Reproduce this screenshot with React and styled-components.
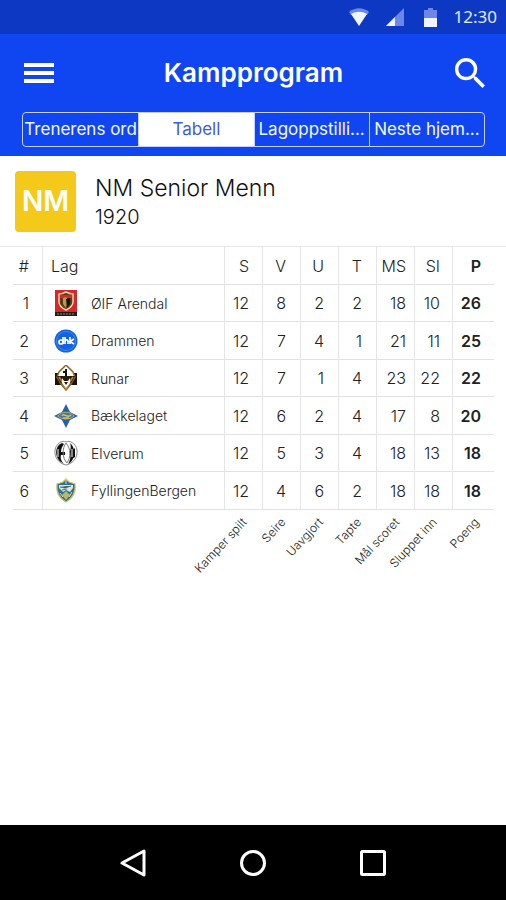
import React from "react";
import styled, { createGlobalStyle } from "styled-components";

const GlobalStyle = createGlobalStyle`
  * { box-sizing: border-box; }
  body {
    margin: 0;
    background: #fff;
    color: #222;
    font-family: Inter, "Liberation Sans", sans-serif;
  }
  button { font-family: inherit; border: 0; padding: 0; background: none; color: inherit; cursor: pointer; }
  svg { display: block; }
`;

const Screen = styled.div`
  display: flex;
  flex-direction: column;
  min-height: 100vh;
`;

const StatusBar = styled.div`
  display: flex;
  justify-content: flex-end;
  align-items: center;
  height: 34px;
  padding-right: 9px;
  background: #0d38c4;
  color: #e4eaff;
`;

const StatusIcon = styled.svg`
  margin-right: ${(p) => p.$gap}px;
`;

const Clock = styled.time`
  font: 17px/34px "Noto Sans", sans-serif;
`;

const Header = styled.header`
  padding: 16px 21px 9px 22px;
  background: #1046f2;
  color: #fff;
`;

const TitleRow = styled.div`
  display: grid;
  grid-template-columns: 1fr auto 1fr;
  align-items: center;
  height: 46px;
  margin-bottom: 16px;
`;

const Title = styled.h1`
  margin: 0;
  font-size: 26px;
  line-height: 46px;
  font-weight: 600;
`;

const IconButton = styled.button`
  justify-self: ${(p) => p.$side};
`;

const Tabs = styled.div`
  display: grid;
  grid-template-columns: repeat(4, 1fr);
  height: 35px;
  border: 1px solid #c3d0ff;
  border-radius: 4px;
  overflow: hidden;
`;

const Tab = styled.button`
  && {
    background: ${(p) => (p.$active ? "#fff" : "transparent")};
    color: ${(p) => (p.$active ? "#3c5be0" : "#f4f6ff")};
    font-size: 17px;
    line-height: 33px;
    white-space: nowrap;
  }
  && + && { border-left: 1px solid #c3d0ff; }
`;

const Main = styled.main`
  flex: 1;
`;

const Competition = styled.section`
  display: flex;
  align-items: center;
  gap: 19px;
  height: 91px;
  padding: 0 15px;
  border-bottom: 1px solid #e8e8e8;
`;

const Badge = styled.div`
  width: 61px;
  border-radius: 4px;
  background: #f5c91a;
  color: #fff;
  font-size: 28px;
  line-height: 61px;
  font-weight: 600;
  text-align: center;
`;

const CompetitionText = styled.div`
  padding-top: 2px;
`;

const CompetitionName = styled.h2`
  margin: 0;
  color: #111;
  font-size: 23px;
  line-height: 30px;
  font-weight: 300;
`;

const Season = styled.p`
  margin: 0;
  color: #111;
  font-size: 20px;
  line-height: 28px;
  font-weight: 300;
`;

const TableWrap = styled.div`
  padding: 0 12px 0 13px;
`;

const Table = styled.table`
  width: 100%;
  table-layout: fixed;
  border-collapse: separate;
  border-spacing: 0;
`;

const Column = styled.col`
  width: ${(p) => (p.$width ? `${p.$width}px` : "auto")};
`;

const Row = styled.tr`
  height: ${(p) => (p.$head ? 38 : 37)}px;
  &:nth-child(even) { height: 38px; }
`;

const Cell = styled.td`
  padding: 0 ${(p) => p.$pad ?? 13}px 0 0;
  border-left: ${(p) => (p.$first ? 0 : 1)}px solid #e6e6e6;
  border-bottom: 1px solid #e2e2e2;
  font-size: 16px;
  font-weight: ${(p) => (p.$strong ? 600 : 300)};
  text-align: right;
`;

const LagCell = styled(Cell)`
  padding: 0 0 0 8px;
  text-align: left;
`;

const Team = styled.div`
  display: flex;
  align-items: center;
  gap: 13px;
  padding-left: 3px;
  font-size: 14px;
`;

const LegendCell = styled.td`
  height: 70px;
  padding: 2px 17px 0 0;
  vertical-align: top;
`;

const LegendSlot = styled.div`
  display: flex;
  justify-content: flex-end;
`;

const LegendLabel = styled.span`
  flex: none;
  font-size: 12px;
  line-height: 16px;
  font-weight: 300;
  white-space: nowrap;
  transform: rotate(-47deg);
  transform-origin: right center;
`;

const SystemNav = styled.nav`
  display: flex;
  justify-content: center;
  gap: 94px;
  align-items: center;
  height: 75px;
  background: #000;
  color: #fff;
`;

const crests = {
  arendal: (
    <>
      <path fill="#d8262c" d="M1 0h22v22H1z" />
      <path fill="#2a1a16" d="M1 22h22v4H1z" />
      <path stroke="#888" strokeDasharray="2 1" d="M3 24h18" />
      <path fill="#5b3b19" stroke="#f0d4a0" strokeWidth="1.5" d="M5 4c3 0 5-1 7-2 2 1 4 2 7 2v8c0 4-3 6-7 8-4-2-7-4-7-8z" />
      <path fill="#d9252b" d="M6 5h12v3H6z" />
      <path fill="#bd9a46" d="M9 8l3-1 2 3-2 8-3-4z" />
      <path fill="#17100b" d="M12 9l4-1v6l-3 4z" />
    </>
  ),
  drammen: (
    <>
      <circle cx="12" cy="13" r="11.5" fill="#1262e2" />
      <circle cx="12" cy="13" r="9.5" fill="none" stroke="#3d8af5" />
      <g fill="none" stroke="#fff" strokeWidth="1.7">
        <circle cx="7" cy="14" r="2" />
        <path d="M9 9v7M11 9v7m0-3c1-2 3-1 3 0v3M16 9v7m4-5-4 2.5 4 2.5" />
      </g>
    </>
  ),
  runar: (
    <>
      <path fill="#171310" d="M1 8h22v12H1z" />
      <path fill="#fff" stroke="#8c671f" strokeWidth="1.5" d="M12 0l7 7 2 5-4 7-5 6-5-6-4-7 2-5z" />
      <path stroke="#17130e" strokeWidth="2" d="M12 4v7M9 7h3" />
      <path fill="#2a1c0c" d="M3 11h18l-3 6-6 6-6-6z" />
      <path fill="none" stroke="#b98b32" strokeWidth="1.5" d="M5 12l4 6 3 6 3-6 4-6" />
      <path fill="#fff" d="M8 13l2 3h4l2-3v5l-4 5-4-5z" />
      <path fill="#2a1c0c" d="M10 17h4l-2 3z" />
    </>
  ),
  baekkelaget: (
    <>
      <path fill="#2461aa" d="M12 1l4 8 8 4-8 4-4 8-4-8-8-4 8-4z" />
      <path fill="#47759a" d="M2 13c5-4 15-4 20 0-5 4-15 4-20 0z" />
      <path fill="none" stroke="#bcae66" d="M4 13c4-5 12-5 16 0-4 4-12 4-16 0z" />
      <path fill="none" stroke="#d8c45e" strokeWidth="1.5" d="M8 13c2-4 5 3 9-1M9 15h6" />
    </>
  ),
  elverum: (
    <>
      <path fill="#fff" stroke="#888" d="M12 2c3-2 10 1 11 8s-4 14-11 15C5 24 0 17 1 10S9 0 12 2z" />
      <path fill="#111" d="M8 3C0 6 1 18 7 22l3 2c-3-3-4-6-3-9h4v-3H7c0-3 1-5 3-8zM16 3c5 4 6 13 1 19l-3 2c2-3 3-7 2-10v-3c1-3 1-5 0-8zM18 11l3-3v9l-3 2z" />
      <path fill="none" stroke="#777" d="M12 3c-4 5-4 15 1 20 4-6 4-14-1-20z" />
      <path stroke="#fff" d="M4 9v8M18 9v8" />
    </>
  ),
  fyllingen: (
    <>
      <path fill="#2b7196" stroke="#cdbb63" strokeWidth="1.3" d="M3 6l6-2 3-3 3 3 6 2c1 8-2 14-9 18C5 20 2 14 3 6z" />
      <path fill="#dce6df" d="M5 7h14v3l-3 4-4-2-3 2-4-4z" />
      <path fill="#bfb768" d="M12 13l4 4-4 5-4-5z" />
      <path stroke="#407e9d" d="M6 9l5 1 6-2M8 12l5-1" />
      <path stroke="#e3dc9d" d="M6 15l3 4M18 14l-3 5M12 1v5" />
    </>
  ),
};

const Crest = ({ name }) => (
  <svg width="24" height="26" viewBox="0 0 24 26" aria-hidden="true">
    {crests[name]}
  </svg>
);

const columns = [
  { key: "S", legend: "Kamper spilt", width: 38 },
  { key: "V", legend: "Seire", width: 38, pad: 14 },
  { key: "U", legend: "Uavgjort", width: 38, pad: 14 },
  { key: "T", legend: "Tapte", width: 38, pad: 14 },
  { key: "MS", legend: "Mål scoret", width: 38, pad: 8 },
  { key: "SI", legend: "Sluppet inn", width: 38, pad: 12 },
  { key: "P", legend: "Poeng", width: 42, strong: true },
];
const teams = [
  { name: "ØIF Arendal", crest: "arendal", stats: [12, 8, 2, 2, 18, 10, 26] },
  { name: "Drammen", crest: "drammen", stats: [12, 7, 4, 1, 21, 11, 25] },
  { name: "Runar", crest: "runar", stats: [12, 7, 1, 4, 23, 22, 22] },
  { name: "Bækkelaget", crest: "baekkelaget", stats: [12, 6, 2, 4, 17, 8, 20] },
  { name: "Elverum", crest: "elverum", stats: [12, 5, 3, 4, 18, 13, 18] },
  { name: "FyllingenBergen", crest: "fyllingen", stats: [12, 4, 6, 2, 18, 18, 18] },
];
const tabs = ["Trenerens ord", "Tabell", "Lagoppstilli...", "Neste hjem..."];

export default function App() {
  return (
    <Screen>
      <GlobalStyle />
      <StatusBar>
        <StatusIcon $gap={17} width="20" height="18" viewBox="0 0 20 18">
          <path fill="#6c87e4" d="M0 4c6-5 14-5 20 0l-2 3H2z" />
          <path fill="#f0f4ff" d="M2 6c5-3 11-3 16 0l-8 12z" />
        </StatusIcon>
        <StatusIcon $gap={20} width="18" height="18" viewBox="0 0 18 18">
          <path fill="#6c87e4" d="M18 0v18H0z" />
          <path fill="#f0f4ff" d="M9 9v9H0z" />
        </StatusIcon>
        <StatusIcon $gap={17} width="13" height="19" viewBox="0 0 13 19">
          <path fill="#6c87e4" d="M4 0h5v2h4v9H0V2h4z" />
          <path fill="#f0f4ff" d="M0 10h13v9H0z" />
        </StatusIcon>
        <Clock>12:30</Clock>
      </StatusBar>

      <Header>
        <TitleRow>
          <IconButton $side="start" aria-label="Meny">
            <svg width="34" height="24" viewBox="0 0 34 24">
              <path fill="#fff" d="M2 2h30v4H2zM2 10h30v4H2zM2 18h30v4H2z" />
            </svg>
          </IconButton>
          <Title>Kampprogram</Title>
          <IconButton $side="end" aria-label="Søk">
            <svg width="30" height="30" viewBox="3 3 17.5 17.5">
              <path
                fill="#fff"
                d="M15.5 14h-.79l-.28-.27A6.47 6.47 0 0 0 16 9.5 6.5 6.5 0 1 0 9.5 16c1.61 0 3.09-.59 4.23-1.57l.27.28v.79l5 4.99L20.49 19l-4.99-5zm-6 0C7.01 14 5 11.99 5 9.5S7.01 5 9.5 5 14 7.01 14 9.5 11.99 14 9.5 14z"
              />
            </svg>
          </IconButton>
        </TitleRow>
        <Tabs role="tablist">
          {tabs.map((tab) => (
            <Tab key={tab} role="tab" aria-selected={tab === "Tabell"} $active={tab === "Tabell"}>
              {tab}
            </Tab>
          ))}
        </Tabs>
      </Header>

      <Main>
        <Competition>
          <Badge>NM</Badge>
          <CompetitionText>
            <CompetitionName>NM Senior Menn</CompetitionName>
            <Season>1920</Season>
          </CompetitionText>
        </Competition>
        <TableWrap>
          <Table>
            <colgroup>
              <Column $width={29} />
              <Column />
              {columns.map((c) => (
                <Column key={c.key} $width={c.width} />
              ))}
            </colgroup>
            <thead>
              <Row $head>
                <Cell as="th" $first>#</Cell>
                <LagCell as="th">Lag</LagCell>
                {columns.map((c) => (
                  <Cell as="th" key={c.key} $pad={c.pad} $strong={c.strong}>{c.key}</Cell>
                ))}
              </Row>
            </thead>
            <tbody>
              {teams.map((team, i) => (
                <Row key={team.name}>
                  <Cell $first>{i + 1}</Cell>
                  <LagCell>
                    <Team>
                      <Crest name={team.crest} />
                      {team.name}
                    </Team>
                  </LagCell>
                  {columns.map((c, j) => (
                    <Cell key={c.key} $pad={c.pad} $strong={c.strong}>{team.stats[j]}</Cell>
                  ))}
                </Row>
              ))}
            </tbody>
            <tfoot>
              <tr>
                <td colSpan="2" />
                {columns.map((c) => (
                  <LegendCell key={c.key}>
                    <LegendSlot>
                      <LegendLabel>{c.legend}</LegendLabel>
                    </LegendSlot>
                  </LegendCell>
                ))}
              </tr>
            </tfoot>
          </Table>
        </TableWrap>
      </Main>

      <SystemNav>
        <button aria-label="Tilbake">
          <svg width="26" height="28" viewBox="0 0 26 28">
            <path fill="none" stroke="#fff" strokeWidth="3" strokeLinejoin="round" d="M24 2v24L2 14z" />
          </svg>
        </button>
        <button aria-label="Hjem">
          <svg width="26" height="26" viewBox="0 0 26 26">
            <circle cx="13" cy="13" r="11.5" fill="none" stroke="#fff" strokeWidth="3" />
          </svg>
        </button>
        <button aria-label="Oversikt">
          <svg width="26" height="26" viewBox="0 0 26 26">
            <rect x="1.5" y="1.5" width="23" height="23" rx="1" fill="none" stroke="#fff" strokeWidth="3" />
          </svg>
        </button>
      </SystemNav>
    </Screen>
  );
}
